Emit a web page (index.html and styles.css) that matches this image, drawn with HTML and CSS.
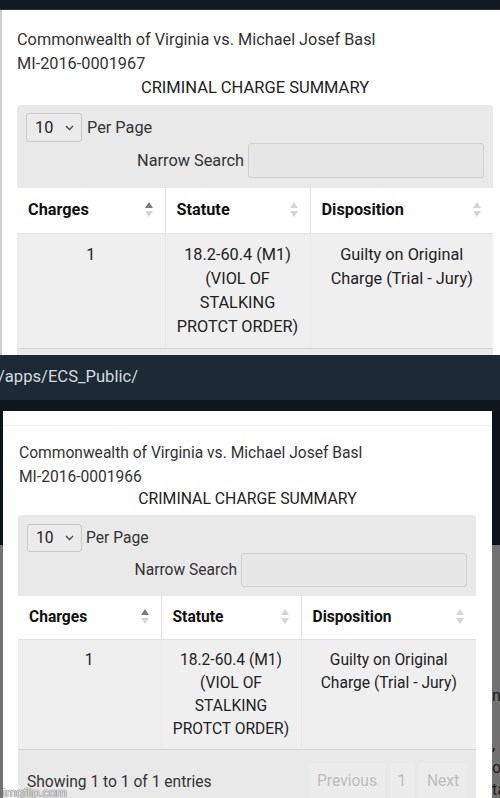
FILE: index.html
```html
<!DOCTYPE html>
<html lang="en">
<head>
<meta charset="UTF-8">
<meta name="viewport" content="width=device-width, initial-scale=1.0">
<title>Criminal Charge Summary</title>
<link rel="stylesheet" href="styles.css">
</head>
<body>

<!-- first capture -->
<div class="shot shot-top">
  <div class="topbar"></div>
  <div class="modal">
    <div class="case-title">Commonwealth of Virginia vs. Michael Josef Basl</div>
    <div class="case-number">MI-2016-0001967</div>
    <h2 class="summary-title">CRIMINAL CHARGE SUMMARY</h2>
    <div class="table-wrap">
      <div class="length">
        <span class="select">10 <svg class="chev" width="9" height="6" viewBox="0 0 9 6"><polyline points="1,1 4.5,4.5 8,1" fill="none" stroke="#444" stroke-width="1.3"/></svg></span>
        <span>Per Page</span>
      </div>
      <div class="filter">
        <label>Narrow Search</label>
        <span class="input"></span>
      </div>
      <table class="charges">
        <thead>
          <tr>
            <th><span>Charges</span><svg class="sort" width="8" height="15" viewBox="0 0 8 15"><polygon points="0,6 4,0 8,6" fill="#7a7a7a"/><polygon points="0,9 4,15 8,9" fill="#d6d6d6"/></svg></th>
            <th><span>Statute</span><svg class="sort" width="8" height="15" viewBox="0 0 8 15"><polygon points="0,6 4,0 8,6" fill="#d6d6d6"/><polygon points="0,9 4,15 8,9" fill="#d6d6d6"/></svg></th>
            <th><span>Disposition</span><svg class="sort" width="8" height="15" viewBox="0 0 8 15"><polygon points="0,6 4,0 8,6" fill="#d6d6d6"/><polygon points="0,9 4,15 8,9" fill="#d6d6d6"/></svg></th>
          </tr>
        </thead>
        <tbody>
          <tr>
            <td>1</td>
            <td>18.2-60.4 (M1) (VIOL OF STALKING PROTCT ORDER)</td>
            <td>Guilty on Original Charge (Trial - Jury)</td>
          </tr>
        </tbody>
      </table>
    </div>
  </div>
</div>

<div class="urlbar">
  <div class="url">/apps/ECS_Public/</div>
</div>

<!-- second capture -->
<div class="shot shot-bottom">
  <div class="side side-left"></div>
  <div class="modal">
    <div class="case-title">Commonwealth of Virginia vs. Michael Josef Basl</div>
    <div class="case-number">MI-2016-0001966</div>
    <h2 class="summary-title">CRIMINAL CHARGE SUMMARY</h2>
    <div class="table-wrap">
      <div class="length">
        <span class="select">10 <svg class="chev" width="9" height="6" viewBox="0 0 9 6"><polyline points="1,1 4.5,4.5 8,1" fill="none" stroke="#444" stroke-width="1.3"/></svg></span>
        <span>Per Page</span>
      </div>
      <div class="filter">
        <label>Narrow Search</label>
        <span class="input"></span>
      </div>
      <table class="charges">
        <thead>
          <tr>
            <th><span>Charges</span><svg class="sort" width="8" height="15" viewBox="0 0 8 15"><polygon points="0,6 4,0 8,6" fill="#7a7a7a"/><polygon points="0,9 4,15 8,9" fill="#d6d6d6"/></svg></th>
            <th><span>Statute</span><svg class="sort" width="8" height="15" viewBox="0 0 8 15"><polygon points="0,6 4,0 8,6" fill="#d6d6d6"/><polygon points="0,9 4,15 8,9" fill="#d6d6d6"/></svg></th>
            <th><span>Disposition</span><svg class="sort" width="8" height="15" viewBox="0 0 8 15"><polygon points="0,6 4,0 8,6" fill="#d6d6d6"/><polygon points="0,9 4,15 8,9" fill="#d6d6d6"/></svg></th>
          </tr>
        </thead>
        <tbody>
          <tr>
            <td>1</td>
            <td>18.2-60.4 (M1) (VIOL OF STALKING PROTCT ORDER)</td>
            <td>Guilty on Original Charge (Trial - Jury)</td>
          </tr>
        </tbody>
      </table>
      <div class="table-foot">
        <div class="info">Showing 1 to 1 of 1 entries</div>
        <div class="paging">
          <span class="page-btn prev">Previous</span>
          <span class="page-btn num">1</span>
          <span class="page-btn next">Next</span>
        </div>
      </div>
    </div>
  </div>
  <div class="side side-right">
    <p class="frag-1">n</p>
    <p class="frag-2">, a</p>
    <p class="frag-3">o</p>
    <p class="frag-4">ta</p>
  </div>
  <div class="watermark">imgflip.com</div>
</div>

</body>
</html>
```

FILE: styles.css
```css
* {
  box-sizing: border-box;
}

body {
  margin: 0;
  width: 500px;
  height: 798px;
  overflow: hidden;
  background: #0d151b;
  font-family: Roboto, 'Liberation Sans', sans-serif;
  color: #333;
}

.shot {
  overflow: hidden;
}

/* ---- shared modal bits ---- */
.modal {
  background: #fff;
}

.case-title,
.case-number {
  white-space: nowrap;
}

.summary-title {
  margin: 0;
  font-weight: normal;
  text-align: center;
  color: #222;
}

.table-wrap {
  background: #e9e9e9;
  border-radius: 4px 4px 0 0;
}

.length {
  display: flex;
  align-items: center;
  gap: 5px;
}

.select {
  display: flex;
  align-items: center;
  justify-content: space-between;
  border: 1px solid #c9c9c9;
  border-radius: 3px;
  background: #ebebeb;
  color: #222;
}

.filter {
  display: flex;
  justify-content: flex-end;
  align-items: center;
  gap: 4px;
}

.input {
  display: block;
  border: 1px solid #cfcfcf;
  border-radius: 3px;
  background: #e7e7e7;
}

.charges {
  width: 100%;
  border-collapse: collapse;
  table-layout: fixed;
}

.charges th {
  background: #fff;
  text-align: left;
  font-weight: bold;
  color: #111;
  border-left: 1px solid #e2e2e2;
  border-bottom: 1px solid #e2e2e2;
}

.charges th:first-child {
  border-left: none;
}

.charges th span {
  float: left;
}

.charges th .sort {
  float: right;
}

.charges td {
  background: #efefef;
  text-align: center;
  vertical-align: top;
  color: #222;
  border-left: 1px solid #eaeaea;
  border-bottom: 1px solid #d4d4d4;
}

.charges td:first-child {
  border-left: none;
}

/* ---- first capture ---- */
.shot-top {
  height: 355px;
  background: #111a21;
}

.topbar {
  height: 10px;
  background: #111a21;
  border-bottom: 1px solid #2b3640;
}

.shot-top .modal {
  height: 345px;
  border-left: 2px solid #cdcdcd;
  padding: 18px 7px 0 15px;
  font-size: 16.3px;
}

.shot-top .case-title,
.shot-top .case-number {
  line-height: 24px;
}

.shot-top .summary-title {
  font-size: 16.5px;
  line-height: 23px;
  margin-bottom: 6px;
}

.shot-top .table-wrap {
  padding-top: 8px;
  height: 250px;
}

.shot-top .length {
  padding-left: 9px;
}

.shot-top .select {
  width: 56px;
  height: 29px;
  padding: 0 7px 0 8px;
}

.shot-top .filter {
  padding-right: 9px;
  margin-top: 1px;
}

.shot-top .input {
  width: 236px;
  height: 35px;
}

.shot-top .charges {
  margin-top: 10px;
}

.shot-top .charges th {
  height: 45px;
  padding: 0 12px 0 11px;
  font-size: 16.3px;
  line-height: 44px;
}

.shot-top .charges th:nth-child(1) { width: 148px; }
.shot-top .charges th:nth-child(2) { width: 145px; }

.shot-top .charges th .sort {
  margin-top: 14px;
}

.shot-top .charges td {
  height: 115px;
  padding: 9px 9px 0;
  font-size: 16.3px;
  line-height: 24px;
}

/* ---- address bar between captures ---- */
.urlbar {
  height: 56px;
  background: #0e161c;
}

.url {
  height: 45px;
  background: #1c2a35;
  color: #d5dbe0;
  font-size: 16.6px;
  line-height: 44px;
  text-indent: -2px;
  white-space: nowrap;
}

/* ---- second capture ---- */
.shot-bottom {
  position: relative;
  height: 387px;
  display: flex;
  background: linear-gradient(#0c141b 0 134px, #727272 134px);
}

.side-left {
  width: 3px;
  flex: none;
}

.side-right {
  width: 8px;
  flex: none;
  overflow: hidden;
  font-size: 16px;
  color: #1e1e1e;
}

.side-right p {
  margin: 0;
  line-height: 20px;
  white-space: nowrap;
}

.side-right .frag-1 { margin-top: 275px; }
.side-right .frag-2 { margin-top: 29px; }
.side-right .frag-3 { margin-top: 3px; }
.side-right .frag-4 { margin-top: 2px; }

.shot-bottom .modal {
  width: 489px;
  flex: none;
  padding: 16px 16px 0 16px;
  font-size: 15.6px;
  border-top: 14px solid #fff;
  box-shadow: inset 0 15px 0 -14px #f0f0f0;
}

.shot-bottom .case-title,
.shot-bottom .case-number {
  line-height: 24px;
}

.shot-bottom .summary-title {
  font-size: 15.8px;
  line-height: 20px;
  margin-bottom: 6px;
}

.shot-bottom .table-wrap {
  padding-top: 9px;
  height: 300px;
  margin-left: -1px;
}

.shot-bottom .length {
  padding-left: 9px;
  gap: 4px;
}

.shot-bottom .select {
  width: 55px;
  height: 28px;
  padding: 0 7px 0 8px;
}

.shot-bottom .filter {
  padding-right: 9px;
  margin-top: 1px;
}

.shot-bottom .input {
  width: 226px;
  height: 34px;
}

.shot-bottom .charges {
  margin-top: 9px;
}

.shot-bottom .charges th {
  height: 43px;
  padding: 0 12px 0 11px;
  font-size: 15.6px;
  line-height: 42px;
}

.shot-bottom .charges th:nth-child(1) { width: 143px; }
.shot-bottom .charges th:nth-child(2) { width: 140px; }

.shot-bottom .charges th .sort {
  margin-top: 13px;
}

.shot-bottom .charges td {
  height: 110px;
  padding: 9px 8px 0;
  font-size: 15.6px;
  line-height: 23px;
}

.table-foot {
  display: flex;
  justify-content: space-between;
  padding: 13px 9px 0 9px;
}

.info {
  padding-top: 8px;
  line-height: 22px;
  font-size: 15.6px;
}

.paging {
  display: flex;
  gap: 5px;
}

.page-btn {
  display: block;
  height: 40px;
  padding-top: 9px;
  background: #ececec;
  color: #bdbdbd;
  font-size: 15.6px;
  text-align: center;
  border-radius: 2px;
}

.page-btn.prev { width: 76px; }
.page-btn.num { width: 24px; }
.page-btn.next { width: 48px; }

.watermark {
  position: absolute;
  left: 3px;
  bottom: -2px;
  font-family: 'Liberation Sans', sans-serif;
  font-size: 13px;
  color: rgba(255, 255, 255, 0.85);
  text-shadow: 0 0 1px #555, 0 0 1px #555;
  letter-spacing: -0.2px;
}
```
